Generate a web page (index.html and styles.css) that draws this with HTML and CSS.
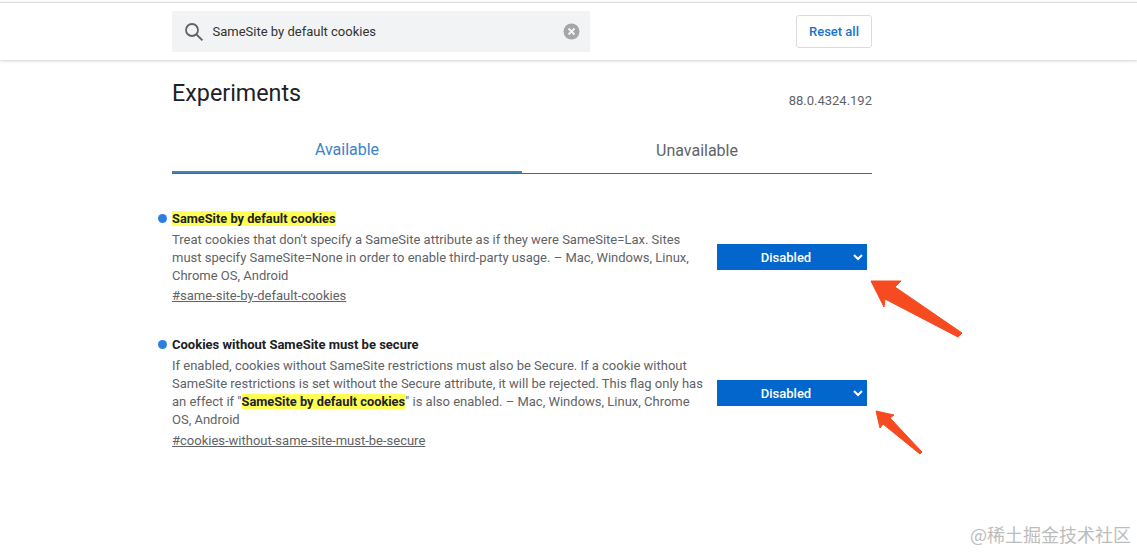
FILE: index.html
```html
<!DOCTYPE html>
<html lang="en">
<head>
    <meta charset="UTF-8">
    <title>Experiments</title>
    <link rel="stylesheet" href="styles.css">
</head>
<body>

<header class="header">
    <div class="header-inner">
        <div class="search">
            <svg class="search-icon" width="20" height="20" viewBox="0 0 20 20" fill="none" stroke="#5f6368" stroke-width="1.8">
                <circle cx="8" cy="8" r="6"/>
                <path d="M12.4 12.4 L18.4 18.4" stroke-width="2"/>
            </svg>
            <span class="search-text">SameSite by default cookies</span>
            <svg class="clear-icon" width="17" height="17" viewBox="0 0 17 17">
                <circle cx="8.5" cy="8.5" r="8" fill="#a4a7aa"/>
                <path d="M5.5 5.5 L11.5 11.5 M11.5 5.5 L5.5 11.5" stroke="#f1f3f4" stroke-width="2"/>
            </svg>
        </div>
        <button class="reset">Reset all</button>
    </div>
</header>

<main class="container">
    <div class="title-row">
        <h1>Experiments</h1>
        <span class="version">88.0.4324.192</span>
    </div>

    <div class="tabs">
        <div class="tab active">Available</div>
        <div class="tab">Unavailable</div>
    </div>

    <div class="flag first">
        <div class="flag-info">
            <h2 class="flag-name"><mark>SameSite by default cookies</mark></h2>
            <p class="flag-desc">Treat cookies that don't specify a SameSite attribute as if they were SameSite=Lax. Sites must specify SameSite=None in order to enable third-party usage. – Mac, Windows, Linux, Chrome OS, Android</p>
            <a class="flag-link" href="#">#same-site-by-default-cookies</a>
        </div>
        <div class="select">Disabled
            <svg class="chevron" width="10" height="7" viewBox="0 0 10 7" fill="none" stroke="#fff" stroke-width="2"><path d="M1 1 L5 5 L9 1"/></svg>
        </div>
    </div>

    <div class="flag second">
        <div class="flag-info">
            <h2 class="flag-name">Cookies without SameSite must be secure</h2>
            <p class="flag-desc">If enabled, cookies without SameSite restrictions must also be Secure. If a cookie without SameSite restrictions is set without the Secure attribute, it will be rejected. This flag only has an effect if "<mark>SameSite by default cookies</mark>" is also enabled. – Mac, Windows, Linux, Chrome OS, Android</p>
            <a class="flag-link" href="#">#cookies-without-same-site-must-be-secure</a>
        </div>
        <div class="select">Disabled
            <svg class="chevron" width="10" height="7" viewBox="0 0 10 7" fill="none" stroke="#fff" stroke-width="2"><path d="M1 1 L5 5 L9 1"/></svg>
        </div>
    </div>
</main>

<!-- red arrows drawn on top of the screenshot -->
<svg class="arrows" width="1137" height="553" viewBox="0 0 1137 553">
    <path fill="#f64a20" stroke="#f64a20" stroke-width="1" stroke-linejoin="round" d="M871 281 L901 281 L895 287 L962 333 L958 337 L885 299 L884 307 Z"/>
    <path fill="#f64a20" stroke="#f64a20" stroke-width="1" stroke-linejoin="round" d="M876 411 L894 415 L890 418 L922 452 L920 454 L883 424 L880 428 Z"/>
</svg>

<div class="watermark">@稀土掘金技术社区</div>

</body>
</html>
```

FILE: styles.css
```css
html, body {
    height: 100%;
}
body {
    margin: 0;
    font-family: Roboto, Arial, sans-serif;
    background-color: #fff;
    color: #202124;
    overflow: hidden;
}
.header {
    height: 57px;
    margin-top: 2px;
    border-top: 1px solid #dcdcdc;
    box-shadow: 0 1px 3px rgba(0, 0, 0, 0.18);
}
.header-inner {
    width: 700px;
    margin-left: 172px;
    display: flex;
    justify-content: space-between;
    align-items: center;
    padding-top: 8px;
}
.search {
    width: 418px;
    height: 41px;
    background-color: #f1f3f4;
    display: flex;
    align-items: center;
    box-sizing: border-box;
    padding: 0 10px 0 12px;
}
.search-icon {
    flex: none;
}
.search-text {
    flex: 1;
    margin-left: 8.5px;
    font-size: 13px;
    color: #333;
}
.reset {
    width: 76px;
    height: 33px;
    margin-top: 0;
    padding: 0;
    background: #fff;
    border: 1px solid #dadce0;
    border-radius: 3px;
    color: #1a73d0;
    font-family: Roboto, Arial, sans-serif;
    font-size: 13px;
    font-weight: 500;
}
.container {
    width: 700px;
    margin-left: 172px;
}
.title-row {
    display: flex;
    justify-content: space-between;
    align-items: flex-end;
    padding-top: 18px;
}
h1 {
    margin: 0;
    font-size: 23.3px;
    font-weight: 400;
    line-height: 30px;
}
.version {
    font-size: 13px;
    color: #5f6368;
    line-height: 16px;
    margin-bottom: -1px;
}
.tabs {
    display: flex;
    margin-top: 27px;
    border-bottom: 1px solid #5f6368;
}
.tab {
    width: 350px;
    height: 38px;
    box-sizing: border-box;
    padding-top: 6px;
    text-align: center;
    font-size: 16px;
    line-height: 20px;
    color: #5f6368;
}
.tab.active {
    color: #3b82cc;
    border-bottom: 2px solid #4285b4;
    margin-bottom: -1px;
    padding-top: 5px;
}
.flag {
    display: flex;
    justify-content: space-between;
    align-items: center;
    position: relative;
    width: 695px;
}
.flag.first {
    margin-top: 37px;
}
.flag.first .select {
    margin-top: -2px;
}
.flag.second {
    margin-top: 32px;
}
.flag.second .flag-link {
    margin-top: 3px;
}
.flag.second .select {
    margin-top: -1px;
}
.flag::before {
    content: "";
    position: absolute;
    left: -14px;
    top: 3px;
    width: 9px;
    height: 9px;
    border-radius: 50%;
    background-color: #2f7de1;
}
.flag-info {
    width: 532px;
}
.flag-name {
    margin: 0;
    font-size: 13px;
    font-weight: 700;
    line-height: 16px;
    color: #202124;
}
.flag-desc {
    margin: 4px 0 0;
    font-size: 13px;
    line-height: 18px;
    color: #5f6368;
}
.flag-link {
    display: inline-block;
    margin-top: 2px;
    font-size: 13px;
    line-height: 18px;
    color: #5f6368;
}
mark {
    background-color: #ffff54;
    color: #202124;
    font-size: 12.8px;
    font-weight: 700;
}
.select {
    flex: none;
    position: relative;
    box-sizing: border-box;
    width: 150px;
    height: 26px;
    padding-right: 12px;
    line-height: 27px;
    background-color: #0366cc;
    color: #fff;
    font-size: 13px;
    font-weight: 500;
    text-align: center;
}
.chevron {
    position: absolute;
    right: 4px;
    top: 10px;
}
.arrows {
    position: absolute;
    left: 0;
    top: 0;
    pointer-events: none;
}
.watermark {
    position: absolute;
    right: 6px;
    top: 521px;
    font-family: "Noto Sans CJK SC", sans-serif;
    font-size: 18px;
    line-height: 26px;
    color: #bcbcbc;
}
```
